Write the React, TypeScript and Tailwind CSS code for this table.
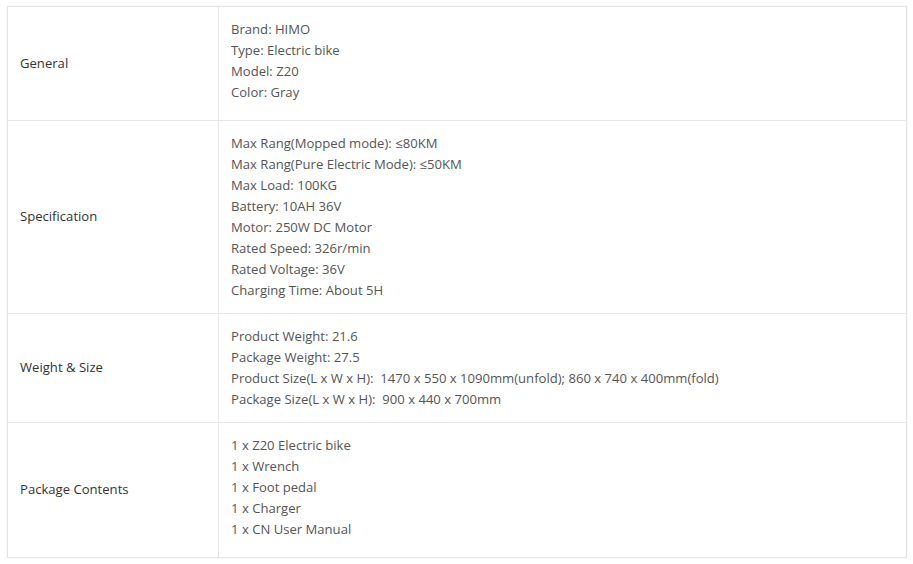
import * as React from "react"

const rows: { label: string; lines: string[]; extra?: boolean }[] = [
  {
    label: "General",
    lines: ["Brand: HIMO", "Type: Electric bike", "Model: Z20", "Color: Gray"],
    extra: true,
  },
  {
    label: "Specification",
    lines: [
      "Max Rang(Mopped mode): ≤80KM",
      "Max Rang(Pure Electric Mode): ≤50KM",
      "Max Load: 100KG",
      "Battery: 10AH 36V",
      "Motor: 250W DC Motor",
      "Rated Speed: 326r/min",
      "Rated Voltage: 36V",
      "Charging Time: About 5H",
    ],
  },
  {
    label: "Weight & Size",
    lines: [
      "Product Weight: 21.6",
      "Package Weight: 27.5",
      "Product Size(L x W x H):  1470 x 550 x 1090mm(unfold); 860 x 740 x 400mm(fold)",
      "Package Size(L x W x H):  900 x 440 x 700mm",
    ],
  },
  {
    label: "Package Contents",
    lines: [
      "1 x Z20 Electric bike",
      "1 x Wrench",
      "1 x Foot pedal",
      "1 x Charger",
      "1 x CN User Manual",
    ],
    extra: true,
  },
]

export default function App() {
  return (
    <div className="min-h-screen bg-white pl-[7px] pt-[6px] font-['Open_Sans',sans-serif] text-[13.1px]">
      <table className="w-[900px] border-collapse border border-[#e3e3e3] shadow-[0_0_2px_rgba(0,0,0,0.08)]">
        <tbody>
          {rows.map((r) => (
            <tr key={r.label} className="border-b border-[#e6e6e6]">
              <td className="w-[211px] border-r border-[#e6e6e6] pl-3 align-middle text-[#333]">
                {r.label}
              </td>
              <td
                className={
                  r.extra
                    ? "pl-3 pt-3 pb-[17px] align-top leading-[21px] text-[#555]"
                    : "pl-3 py-3 align-top leading-[21px] text-[#555]"
                }
              >
                {r.lines.map((l) => (
                  <div key={l} className="whitespace-pre">
                    {l}
                  </div>
                ))}
              </td>
            </tr>
          ))}
        </tbody>
      </table>
    </div>
  )
}
